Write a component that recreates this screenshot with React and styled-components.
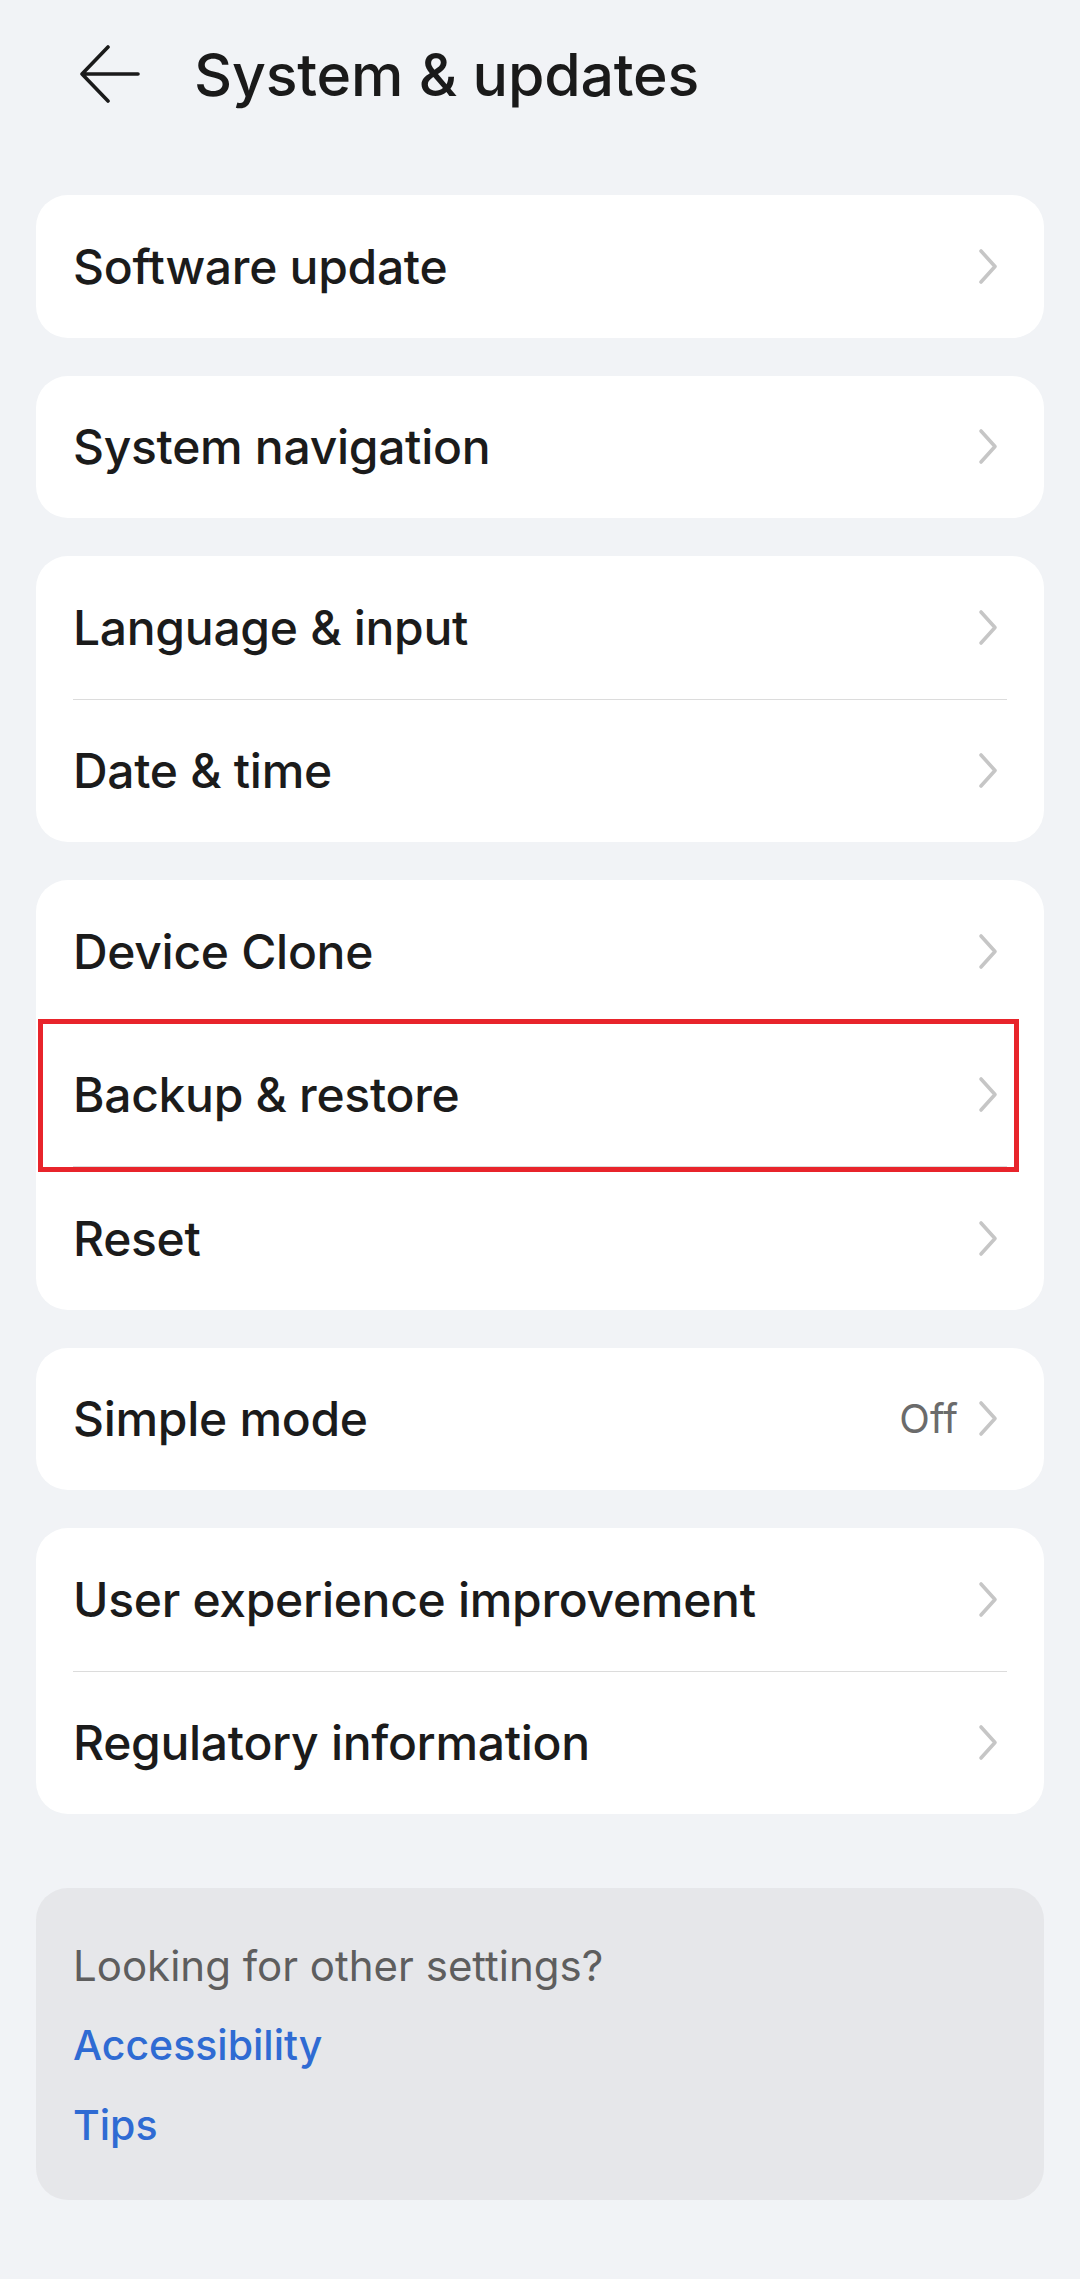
import React from 'react'
import styled, { createGlobalStyle } from 'styled-components'

const GlobalStyle = createGlobalStyle`
    html, body {
        margin: 0;
        padding: 0;
        background-color: #f1f3f6;
    }
    body {
        font-family: Inter, "Noto Sans", "Liberation Sans", sans-serif;
        -webkit-font-smoothing: antialiased;
    }
`

const Page = styled.div`
    min-height: 2279px;
    padding: 0 36px;
    box-sizing: border-box;
    background-color: #f1f3f6;
`

const Header = styled.header`
    height: 148px;
    display: flex;
    align-items: center;
    padding-left: 44px;
`

const BackButton = styled.button`
    border: none;
    background: none;
    padding: 0;
    width: 60px;
    height: 58px;
    display: flex;
    align-items: center;
    cursor: pointer;
`

const Title = styled.h1`
    margin: 0 0 0 54px;
    font-size: 59px;
    font-weight: 500;
    color: #1a1a1a;
    letter-spacing: -0.2px;
`

const List = styled.div`
    margin-top: 47px;
    display: flex;
    flex-direction: column;
    gap: 38px;
`

const Card = styled.div`
    background-color: #ffffff;
    border-radius: 32px;
    display: flex;
    flex-direction: column;
`

const Row = styled.div`
    position: relative;
    height: 142.5px;
    display: flex;
    align-items: center;
    padding: 0 46px 0 37px;
    cursor: pointer;
`

const Label = styled.span`
    flex: 1;
    font-size: 48px;
    font-weight: 500;
    color: #1b1b1b;
    letter-spacing: -0.3px;
`

const Value = styled.span`
    font-size: 40px;
    font-weight: 400;
    color: #6b6b6b;
    margin-right: 20px;
`

const Divider = styled.div`
    height: 1px;
    margin: 0 37px;
    background-color: #dcdcdc;
`

// red outline drawn over the highlighted row
const Highlight = styled.div`
    position: absolute;
    top: -5px;
    bottom: -6px;
    left: 2px;
    right: 25px;
    border: 5px solid #e8242b;
    pointer-events: none;
`

const MoreBox = styled.div`
    margin-top: 74px;
    background-color: #e6e7ea;
    border-radius: 32px;
    padding: 37px 37px 35px;
    display: flex;
    flex-direction: column;
`

const MoreText = styled.div`
    height: 80px;
    display: flex;
    align-items: center;
    font-size: 42px;
    font-weight: 400;
    color: #5e5e5e;
`

const MoreLink = styled.a`
    height: 80px;
    display: flex;
    align-items: center;
    font-size: 41px;
    font-weight: 500;
    color: #2f6bd3;
    text-decoration: none;
`

const BackArrow = () => (
    <svg width="60" height="58" viewBox="0 0 60 58" fill="none">
        <path
            d="M58 29 H2 M28 2 L2 29 L28 56"
            stroke="#1a1a1a"
            strokeWidth="3.6"
            strokeLinecap="round"
            strokeLinejoin="round"
        />
    </svg>
)

const Chevron = () => (
    <svg width="20" height="37" viewBox="0 0 20 37" fill="none">
        <polyline
            points="3,3 17,18.5 3,34"
            stroke="#c6c6c6"
            strokeWidth="3.6"
            strokeLinecap="round"
            strokeLinejoin="round"
        />
    </svg>
)

const groups = [
    [{ label: 'Software update' }],
    [{ label: 'System navigation' }],
    [{ label: 'Language & input' }, { label: 'Date & time' }],
    [{ label: 'Device Clone' }, { label: 'Backup & restore', marked: true }, { label: 'Reset' }],
    [{ label: 'Simple mode', value: 'Off' }],
    [{ label: 'User experience improvement' }, { label: 'Regulatory information' }],
]

const SettingRow = ({ label, value, marked }) => (
    <Row>
        <Label>{label}</Label>
        {value && <Value>{value}</Value>}
        <Chevron />
        {marked && <Highlight />}
    </Row>
)

export default function App() {
    return (
        <>
            <GlobalStyle />
            <Page>
                <Header>
                    <BackButton aria-label="Back">
                        <BackArrow />
                    </BackButton>
                    <Title>System &amp; updates</Title>
                </Header>

                <List>
                    {groups.map((items, i) => (
                        <Card key={i}>
                            {items.map((item, j) => (
                                <React.Fragment key={item.label}>
                                    {j > 0 && <Divider />}
                                    <SettingRow {...item} />
                                </React.Fragment>
                            ))}
                        </Card>
                    ))}
                </List>

                <MoreBox>
                    <MoreText>Looking for other settings?</MoreText>
                    <MoreLink href="#">Accessibility</MoreLink>
                    <MoreLink href="#">Tips</MoreLink>
                </MoreBox>
            </Page>
        </>
    )
}
